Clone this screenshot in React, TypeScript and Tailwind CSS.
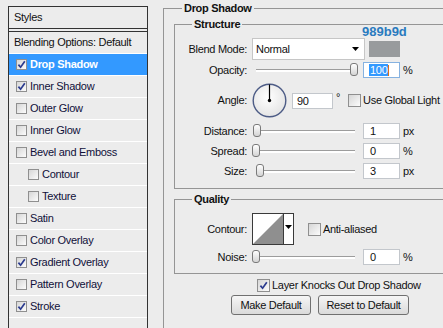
import React from 'react';

type Row = { label: string; checked?: boolean; selected?: boolean; indent?: boolean };

const styleRows: Row[] = [
  { label: 'Drop Shadow', checked: true, selected: true },
  { label: 'Inner Shadow', checked: true },
  { label: 'Outer Glow' },
  { label: 'Inner Glow' },
  { label: 'Bevel and Emboss' },
  { label: 'Contour', indent: true },
  { label: 'Texture', indent: true },
  { label: 'Satin' },
  { label: 'Color Overlay' },
  { label: 'Gradient Overlay', checked: true },
  { label: 'Pattern Overlay' },
  { label: 'Stroke', checked: true },
];

function Check({ checked, small }: { checked?: boolean; small?: boolean }) {
  return (
    <span
      className={`${small ? 'w-[11px] h-[11px]' : 'w-[13px] h-[13px]'} shrink-0 border border-[#8f8f8f] bg-gradient-to-br from-[#d6d6d6] to-[#fcfcfc] flex items-center justify-center`}
    >
      {checked && (
        <svg width="9" height="9" viewBox="0 0 9 9">
          <path d="M1.4 4.6 L3.6 7.2 L7.8 1.2" fill="none" stroke="#2b3b8f" strokeWidth="1.7" />
        </svg>
      )}
    </span>
  );
}

function Slider({ pos }: { pos: number }) {
  return (
    <div className="relative w-[107px] h-[16px] flex items-center">
      <div className="mx-[4px] flex-1 h-[3px] border-t border-[#9c9c9c] bg-white" />
      <div
        className="absolute top-[1px] w-[8px] h-[13px] rounded-[3px] border border-[#7a7a7a] bg-gradient-to-b from-white to-[#d4d4d4]"
        style={{ left: pos }}
      />
    </div>
  );
}

function NumBox({ value, unit }: { value: string; unit: string }) {
  return (
    <>
      <div className="w-[37px] h-[16px] border border-[#c3c7cc] bg-white pl-[6px] leading-[14px]">{value}</div>
      <span className="ml-[3px] leading-[14px]">{unit}</span>
    </>
  );
}

function Label({ text }: { text: string }) {
  return <span className="w-[72px] text-right shrink-0">{text}</span>;
}

function SliderRow({ label, pos, value, unit, className }: { label: string; pos: number; value: string; unit: string; className: string }) {
  return (
    <div className={`flex items-center h-[16px] ${className}`}>
      <Label text={label} />
      <div className="ml-[5px]">
        <Slider pos={pos} />
      </div>
      <div className="ml-[4px] flex items-center">
        <NumBox value={value} unit={unit} />
      </div>
    </div>
  );
}

function Dial() {
  return (
    <svg width="35" height="35" viewBox="0 0 35 35">
      <defs>
        <radialGradient id="dialFill" cx="0.45" cy="0.4" r="0.65">
          <stop offset="0" stopColor="#ffffff" />
          <stop offset="1" stopColor="#e2e2e2" />
        </radialGradient>
      </defs>
      <circle cx="17.5" cy="17.5" r="16.3" fill="url(#dialFill)" stroke="#4d5c86" strokeWidth="1.4" />
      <line x1="17.5" y1="17.5" x2="17.5" y2="1.5" stroke="#000" strokeWidth="1.2" />
      <circle cx="17.5" cy="17.5" r="1.7" fill="#000" />
    </svg>
  );
}

function ContourPreview() {
  return (
    <div className="w-[42px] h-[32px] border border-[#3a3a3a] bg-white flex">
      <svg width="30" height="30" viewBox="0 0 30 30" className="shrink-0">
        <rect width="30" height="30" fill="#fff" />
        <polygon points="0,30 30,0 30,30" fill="#8f8f8f" />
      </svg>
      <div className="flex-1 border-l border-[#3a3a3a] flex items-start justify-center pt-[11px]">
        <svg width="7" height="4" viewBox="0 0 7 4">
          <polygon points="0,0 7,0 3.5,4" fill="#000" />
        </svg>
      </div>
    </div>
  );
}

export default function App() {
  return (
    <div className="w-[443px] h-[328px] overflow-hidden bg-[#ececec] flex items-start text-[11px] tracking-[-0.3px] text-[#111] font-['Liberation_Sans',Arial,sans-serif]">
      {/* styles list */}
      <div className="ml-[8px] mt-[6px] w-[140px] h-[340px] border border-[#333] shrink-0 flex flex-col">
        <div className="h-[21px] pl-[5px] flex items-center">Styles</div>
        <div className="h-[4px] border-y border-[#333]" />
        <div className="h-[22px] pl-[5px] flex items-center border-b border-white">Blending Options: Default</div>
        {styleRows.map((r) => (
          <div
            key={r.label}
            className={`h-[22px] flex items-center gap-[3px] border-b border-white ${r.indent ? 'pl-[19px]' : 'pl-[7px]'} ${r.selected ? 'bg-[#3399ff] text-white font-bold' : 'text-[#10103a]'}`}
          >
            <Check checked={r.checked} small />
            <span>{r.label}</span>
          </div>
        ))}
      </div>

      {/* Drop Shadow panel */}
      <fieldset className="ml-[15px] mt-[2px] w-[300px] h-[340px] border-l border-t border-[#959595] shrink-0">
        <legend className="ml-[18px] px-[2px] font-bold leading-[13px]">Drop Shadow</legend>

        <fieldset className="ml-[10px] mt-[3px] w-[290px] border-l border-t border-b border-[#959595] pb-[9px]">
          <legend className="ml-[17px] px-[2px] font-bold leading-[13px]">Structure</legend>

          <div className="flex items-center h-[22px] mt-[7px]">
            <Label text="Blend Mode:" />
            <div className="ml-[5px] w-[113px] h-[22px] border border-[#c6c6c6] bg-white flex items-center justify-between pl-[3px] pr-[5px]">
              <span>Normal</span>
              <svg width="7" height="4" viewBox="0 0 7 4">
                <polygon points="0,0 7,0 3.5,4" fill="#000" />
              </svg>
            </div>
            <div className="relative ml-[4px] w-[31px] h-[16px] bg-[#989b9d]">
              <span className="absolute bottom-full mb-[2px] -left-[7px] text-[13px] font-bold tracking-normal leading-[14px] text-[#2a7bbf]">
                989b9d
              </span>
            </div>
          </div>

          <div className="flex items-center h-[16px] mt-[2px]">
            <Label text="Opacity:" />
            <div className="ml-[5px]">
              <Slider pos={98} />
            </div>
            <div className="ml-[4px] w-[37px] h-[16px] border border-[#86b2e0] bg-white pl-[5px] flex items-center">
              <span className="bg-[#3399ff] text-white leading-[12px] px-[1px]">100</span>
              <span className="w-[1px] h-[11px] bg-[#d8701c]" />
            </div>
            <span className="ml-[3px]">%</span>
          </div>

          <div className="flex items-center mt-[5px] h-[35px]">
            <Label text="Angle:" />
            <div className="ml-[5px]">
              <Dial />
            </div>
            <div className="ml-[5px] w-[41px] h-[16px] border border-[#c3c7cc] bg-white pl-[4px] leading-[14px]">90</div>
            <span className="ml-[3px] self-start mt-[9px] leading-[10px]">°</span>
            <div className="ml-[8px] flex items-center gap-[2px]">
              <Check />
              <span>Use Global Light</span>
            </div>
          </div>

          <SliderRow label="Distance:" pos={1} value="1" unit="px" className="mt-[5px]" />
          <SliderRow label="Spread:" pos={0} value="0" unit="%" className="mt-[4px]" />
          <SliderRow label="Size:" pos={4} value="3" unit="px" className="mt-[4px]" />
        </fieldset>

        <fieldset className="ml-[10px] mt-[4px] w-[290px] border-l border-t border-b border-[#959595] pb-[8px]">
          <legend className="ml-[17px] px-[2px] font-bold leading-[13px]">Quality</legend>

          <div className="flex items-center mt-[7px] h-[32px]">
            <Label text="Contour:" />
            <div className="ml-[5px]">
              <ContourPreview />
            </div>
            <div className="ml-[14px] flex items-center gap-[2px]">
              <Check />
              <span>Anti-aliased</span>
            </div>
          </div>

          <SliderRow label="Noise:" pos={0} value="0" unit="%" className="mt-[4px]" />
        </fieldset>

        <div className="ml-[93px] mt-[5px] h-[13px] flex items-center gap-[2px]">
          <Check checked />
          <span>Layer Knocks Out Drop Shadow</span>
        </div>

        <div className="ml-[67px] mt-[3px] flex gap-[7px]">
          <button className="w-[80px] h-[20px] rounded-[3px] border border-[#707070] bg-gradient-to-b from-[#f6f6f6] to-[#dadada] text-[#111]">
            Make Default
          </button>
          <button className="w-[91px] h-[20px] rounded-[3px] border border-[#707070] bg-gradient-to-b from-[#f6f6f6] to-[#dadada] text-[#111]">
            Reset to Default
          </button>
        </div>
      </fieldset>
    </div>
  );
}
